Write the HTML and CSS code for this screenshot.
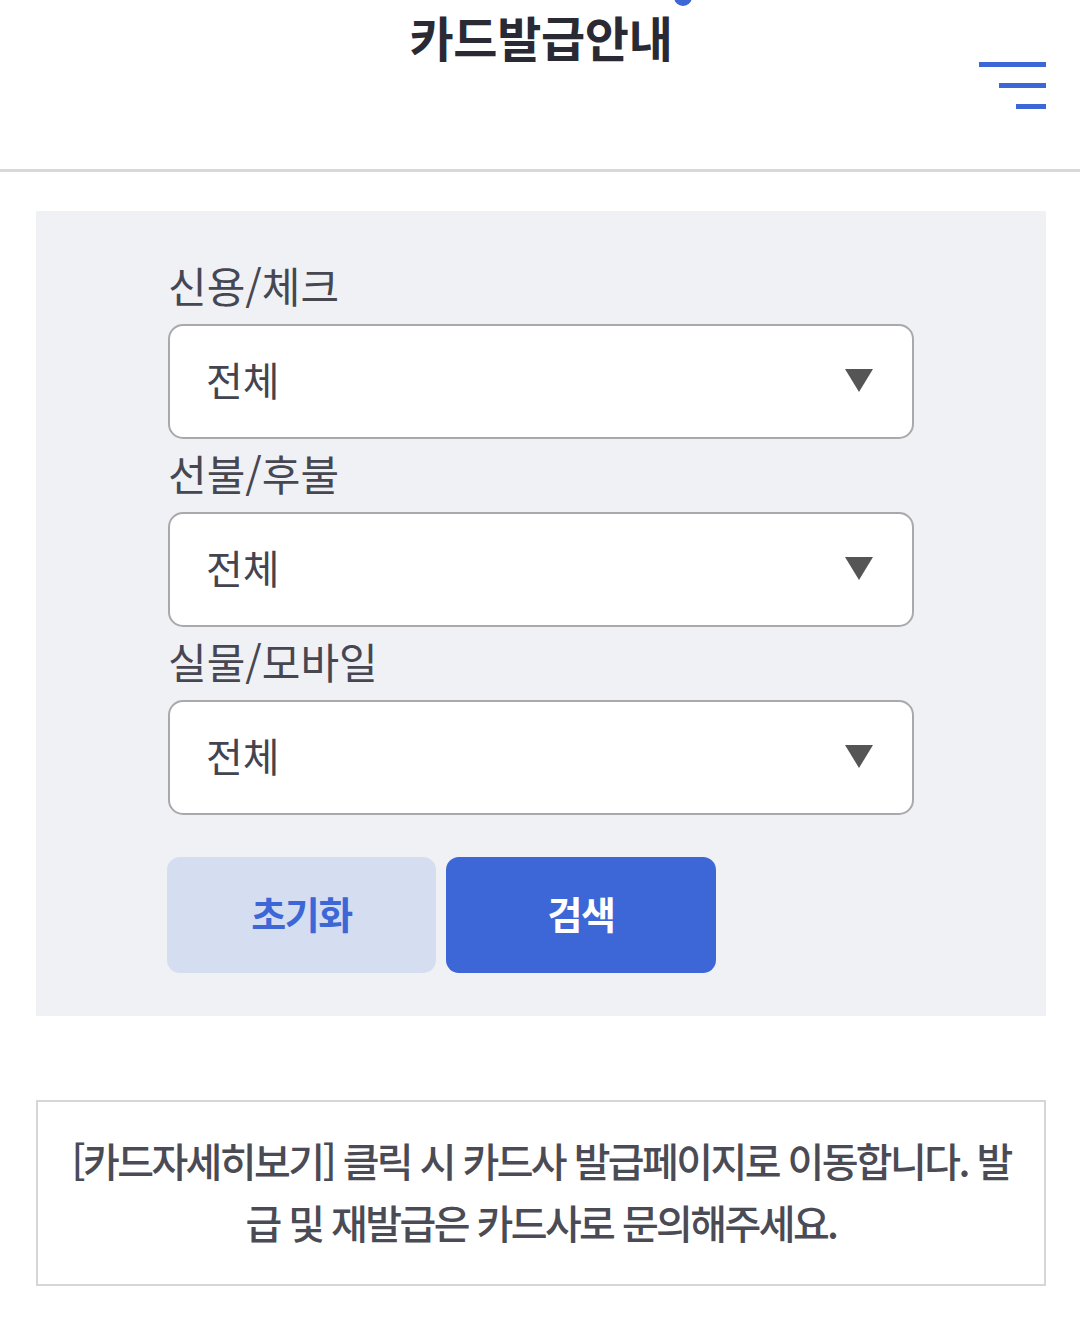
FILE: index.html
```html
<!DOCTYPE html>
<html lang="ko">
<head>
<meta charset="utf-8">
<title>카드발급안내</title>
<link rel="stylesheet" href="styles.css">
</head>
<body>
<header class="header">
  <div class="header-side"></div>
  <h1 class="title">카드발급안내</h1>
  <div class="header-side header-right">
    <button class="menu" aria-label="메뉴">
      <span class="bar bar-1"></span>
      <span class="bar bar-2"></span>
      <span class="bar bar-3"></span>
    </button>
  </div>
</header>

<main class="content">
  <section class="filter">
    <div class="field">
      <div class="label">신용/체크</div>
      <div class="select"><span class="select-text">전체</span><svg class="caret" width="28" height="23" viewBox="0 0 28 23"><polygon points="0,0 28,0 14,23" fill="#555555"/></svg></div>
    </div>
    <div class="field">
      <div class="label">선불/후불</div>
      <div class="select"><span class="select-text">전체</span><svg class="caret" width="28" height="23" viewBox="0 0 28 23"><polygon points="0,0 28,0 14,23" fill="#555555"/></svg></div>
    </div>
    <div class="field">
      <div class="label">실물/모바일</div>
      <div class="select"><span class="select-text">전체</span><svg class="caret" width="28" height="23" viewBox="0 0 28 23"><polygon points="0,0 28,0 14,23" fill="#555555"/></svg></div>
    </div>
    <div class="buttons">
      <button class="btn btn-reset">초기화</button>
      <button class="btn btn-search">검색</button>
    </div>
  </section>

  <section class="notice">
    <p class="notice-text">[카드자세히보기] 클릭 시 카드사 발급페이지로 이동합니다. 발급 및 재발급은 카드사로 문의해주세요.</p>
  </section>
</main>
</body>
</html>
```

FILE: styles.css
```css
* {
  box-sizing: border-box;
}

html, body {
  margin: 0;
  padding: 0;
  background: #ffffff;
}

body {
  font-family: "Noto Sans CJK KR", "Noto Sans", "Liberation Sans", sans-serif;
  color: #4b4b55;
  width: 1080px;
  height: 1322px;
  overflow: hidden;
}

.header {
  display: grid;
  grid-template-columns: 1fr auto 1fr;
  height: 172px;
  border-bottom: 3px solid #d8d8d8;
}

.title {
  position: relative;
  margin: 12px 0 0 2px;
  align-self: start;
  font-size: 48px;
  line-height: 1;
  font-weight: 700;
  letter-spacing: -0.3px;
  color: #2a2a35;
}

.title::after {
  content: "";
  position: absolute;
  right: -19px;
  top: -24px;
  width: 18px;
  height: 18px;
  border-radius: 50%;
  background: #3d67d6;
}

.header-right {
  display: flex;
  justify-content: flex-end;
  align-items: flex-start;
  padding-right: 34px;
}

.menu {
  margin-top: 62px;
  padding: 0;
  border: 0;
  background: none;
  display: flex;
  flex-direction: column;
  align-items: flex-end;
  gap: 16px;
}

.bar {
  display: block;
  height: 5px;
  background: #3d67d6;
}

.bar-1 { width: 67px; }
.bar-2 { width: 47px; }
.bar-3 { width: 30px; }

.content {
  padding: 39px 34px 0 36px;
}

.filter {
  background: #f0f1f5;
  padding: 44px 132px 43px;
}

.field + .field .label {
  margin-top: 4px;
}

.label {
  height: 60px;
  line-height: 60px;
  margin-bottom: 9px;
  font-size: 42px;
  letter-spacing: 0;
  color: #474752;
}

.select {
  display: flex;
  align-items: center;
  justify-content: space-between;
  height: 115px;
  padding: 0 39px 0 36px;
  background: #ffffff;
  border: 2px solid #a9a9ad;
  border-radius: 15px;
}

.select-text {
  font-size: 40px;
  line-height: 1;
  padding-bottom: 6px;
  letter-spacing: 0;
  color: #444450;
}

.caret {
  display: block;
  margin-top: -2px;
}

.buttons {
  display: flex;
  gap: 10px;
  margin: 42px 0 0 -1px;
}

.btn {
  width: 269px;
  height: 116px;
  border: 0;
  border-radius: 13px;
  font-family: "Noto Sans CJK KR", "Noto Sans", sans-serif;
  font-size: 38px;
  font-weight: 700;
  letter-spacing: -1.5px;
  padding: 0 0 6px;
}

.btn-search {
  width: 270px;
}

.btn-reset {
  background: #d5def0;
  color: #3d67d6;
}

.btn-search {
  background: #3d67d6;
  color: #ffffff;
}

.notice {
  margin-top: 84px;
  border: 2px solid #d6d6d6;
  padding: 27px 30px 31px;
}

.notice-text {
  margin: 0;
  text-align: center;
  font-size: 40px;
  font-weight: 500;
  line-height: 62px;
  letter-spacing: -2.6px;
  color: #4b4b55;
}
```
